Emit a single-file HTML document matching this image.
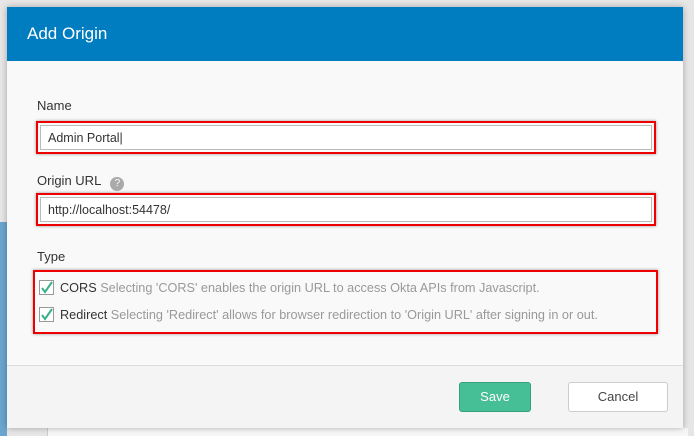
<!DOCTYPE html>
<html><head><style>
body{margin:0;width:694px;height:436px;background:#d9d9d9;font-family:"Liberation Sans",sans-serif;position:relative;overflow:hidden}
.bgl{position:absolute;left:0;top:0;width:694px;height:436px;background:#e6e6e6}
.modal{position:absolute;left:7px;top:7px;width:676px;height:421px;background:#f9f9f9;box-shadow:0 0 6px rgba(0,0,0,.3)}
.hdr{height:54px;background:#007cc0;color:#fff;font-size:17px;line-height:54px;padding-left:20px}
.lbl{position:absolute;left:30px;font-size:13px;color:#333}
.red{position:absolute;border:2px solid #e00;box-shadow:0 0 3px rgba(0,0,0,.4)}
.inp{position:absolute;left:2px;top:2px;right:2px;bottom:2px;background:#fff;border:1px solid #bbb;font-size:12.5px;color:#333;padding-left:7px;line-height:24px}
.cb{display:inline-block;width:13px;height:13px;border:1px solid #999;background:#fff;vertical-align:-3px;margin-right:6px;position:relative}
.row{position:absolute;left:4px;font-size:12.7px;color:#333}
.row span{color:#999}
.ftr{position:absolute;left:0;right:0;top:358px;bottom:0;background:#f4f4f4;border-top:1px solid #ddd}
.btn{position:absolute;top:16px;height:28px;border-radius:3px;font-size:13px;text-align:center;line-height:28px}
</style></head><body>
<div class="bgl"></div>
<div style="position:absolute;left:0;top:222px;width:7px;height:214px;background:#6aa5cf"></div>
<div style="position:absolute;left:47px;top:428px;width:640px;height:8px;background:#f7f7f7;border-left:1px solid #ccc"></div>
<div class="modal">
<div class="hdr">Add Origin</div>
<div class="lbl" style="top:91px">Name</div>
<div class="red" style="left:29px;top:114px;width:616px;height:29px"><div class="inp">Admin Portal|</div></div>
<div class="lbl" style="top:166px">Origin URL <span style="display:inline-block;width:14px;height:14px;border-radius:7px;background:#aaa;color:#fff;font-size:10px;text-align:center;line-height:14px;margin-left:6px;vertical-align:-1px">?</span></div>
<div class="red" style="left:29px;top:186px;width:616px;height:29px"><div class="inp">http://localhost:54478/</div></div>
<div class="lbl" style="top:242px">Type</div>
<div class="red" style="left:26px;top:263px;width:621px;height:60px">
<div class="row" style="top:8px"><i class="cb"><svg width="13" height="13" style="position:absolute;left:0;top:0"><path d="M2 7l3 4 7-10" stroke="#3ab08a" stroke-width="2" fill="none"/></svg></i>CORS <span>Selecting 'CORS' enables the origin URL to access Okta APIs from Javascript.</span></div>
<div class="row" style="top:35px"><i class="cb"><svg width="13" height="13" style="position:absolute;left:0;top:0"><path d="M2 7l3 4 7-10" stroke="#3ab08a" stroke-width="2" fill="none"/></svg></i>Redirect <span>Selecting 'Redirect' allows for browser redirection to 'Origin URL' after signing in or out.</span></div>
</div>
<div class="ftr">
<div class="btn" style="left:452px;width:70px;background:#46be96;border:1px solid #36a07e;color:#fff">Save</div>
<div class="btn" style="left:561px;width:98px;background:#fff;border:1px solid #ccc;color:#444">Cancel</div>
</div>
</div>
</body></html>
